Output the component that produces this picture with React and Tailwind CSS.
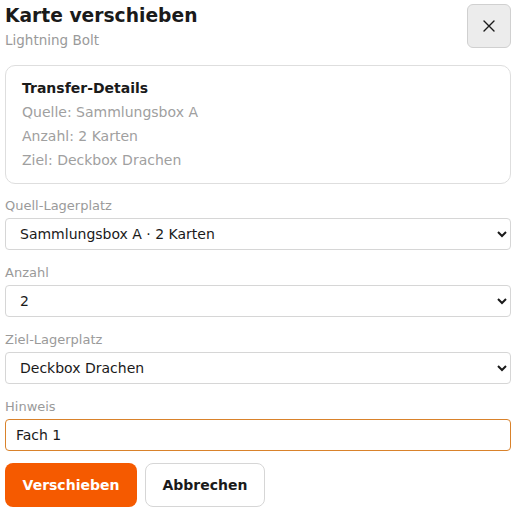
import React from "react";

const font = { fontFamily: '"DejaVu Sans", Verdana, sans-serif' };

function Field({ label, children }) {
  return (
    <div className="flex flex-col gap-[4px]">
      <label className="text-[13px] leading-[16px] text-[#9a9a9a]">{label}</label>
      {children}
    </div>
  );
}

export default function App() {
  const selectCls =
    "h-[32px] w-full rounded-[4px] border border-[#d6d6d6] bg-white pl-[10px] text-[14px] text-[#1a1a1a]";
  return (
    <div className="min-h-[512px] bg-white px-[5px] pt-[4px]" style={font}>
      <div className="flex items-start justify-between">
        <div className="pt-[1px]">
          <h1 className="text-[18.7px] font-bold leading-[22px] text-[#1a1a1a]">Karte verschieben</h1>
          <div className="mt-[5px] text-[13.5px] leading-[16px] text-[#9a9a9a]">Lightning Bolt</div>
        </div>
        <button className="flex h-[44px] w-[44px] items-center justify-center rounded-[6px] border border-[#d0d0d0] bg-[#ececec] text-[#1a1a1a]">
          <svg width="12" height="12" viewBox="0 0 12 12" stroke="currentColor" strokeWidth="1.4" strokeLinecap="round">
            <path d="M1 1 L11 11 M11 1 L1 11" />
          </svg>
        </button>
      </div>

      <div className="mt-[17px] rounded-[10px] border border-[#dedede] px-[16px] pb-[15px] pt-[13px]">
        <div className="text-[14px] font-bold leading-[18px] text-[#1a1a1a]">Transfer-Details</div>
        <div className="mt-[7px] flex flex-col gap-[8px] text-[14px] leading-[16px] text-[#a0a0a0]">
          <div>Quelle: Sammlungsbox A</div>
          <div>Anzahl: 2 Karten</div>
          <div>Ziel: Deckbox Drachen</div>
        </div>
      </div>

      <div className="mt-[14px] flex flex-col gap-[15px]">
        <Field label="Quell-Lagerplatz">
          <select className={selectCls} defaultValue="a">
            <option value="a">Sammlungsbox A · 2 Karten</option>
          </select>
        </Field>
        <Field label="Anzahl">
          <select className={selectCls} defaultValue="2">
            <option value="1">1</option>
            <option value="2">2</option>
          </select>
        </Field>
        <Field label="Ziel-Lagerplatz">
          <select className={selectCls} defaultValue="d">
            <option value="d">Deckbox Drachen</option>
          </select>
        </Field>
        <Field label="Hinweis">
          <input
            className="h-[32px] w-full rounded-[4px] border border-[#d9822b] bg-white px-[10px] text-[14px] text-[#1a1a1a] outline-none"
            defaultValue="Fach 1"
          />
        </Field>
      </div>

      <div className="mt-[12px] flex gap-[8px]">
        <button className="h-[44px] w-[132px] rounded-[8px] bg-[#f55a00] text-[14px] font-bold text-white">
          Verschieben
        </button>
        <button className="h-[44px] w-[120px] rounded-[8px] border border-[#d6d6d6] bg-white text-[14px] font-bold text-[#1a1a1a]">
          Abbrechen
        </button>
      </div>
    </div>
  );
}
